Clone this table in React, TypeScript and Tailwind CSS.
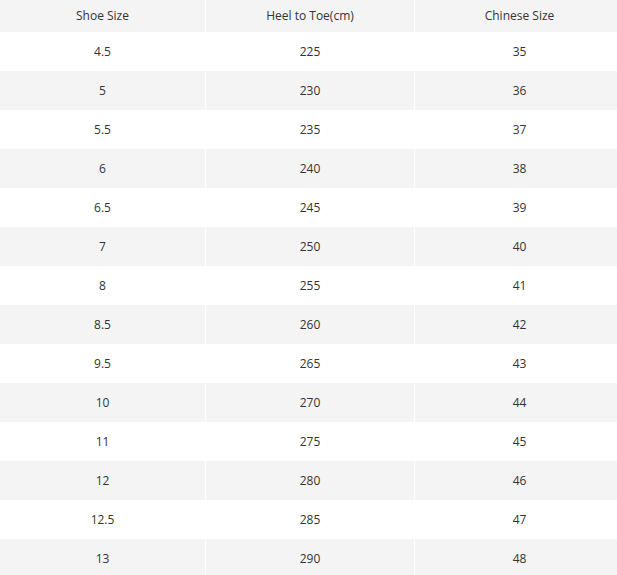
import React from "react";

const rows: [string, string, string][] = [
  ["4.5", "225", "35"],
  ["5", "230", "36"],
  ["5.5", "235", "37"],
  ["6", "240", "38"],
  ["6.5", "245", "39"],
  ["7", "250", "40"],
  ["8", "255", "41"],
  ["8.5", "260", "42"],
  ["9.5", "265", "43"],
  ["10", "270", "44"],
  ["11", "275", "45"],
  ["12", "280", "46"],
  ["12.5", "285", "47"],
  ["13", "290", "48"],
];

function Row({ cells, grey, header }: { cells: string[]; grey: boolean; header?: boolean }) {
  return (
    <div
      className={`grid grid-cols-[205px_209px_210px] shrink-0 ${header ? "h-[32px]" : "h-[39px]"} ${grey ? "bg-[#f4f4f4]" : "bg-white"}`}
    >
      {cells.map((c, i) => (
        <div
          key={i}
          className={`flex items-center justify-center ${i > 0 ? "border-l border-white" : ""}`}
        >
          {c}
        </div>
      ))}
    </div>
  );
}

export default function App() {
  return (
    <div
      className="w-[617px] h-[575px] overflow-hidden bg-white"
    >
      <div
        className="w-[624px] flex flex-col text-[12px] text-[#333333]"
        style={{ fontFamily: '"Open Sans", "Noto Sans", sans-serif' }}
      >
        <Row cells={["Shoe Size", "Heel to Toe(cm)", "Chinese Size"]} grey header />
        {rows.map((r, i) => (
          <Row key={i} cells={r} grey={i % 2 === 1} />
        ))}
      </div>
    </div>
  );
}
